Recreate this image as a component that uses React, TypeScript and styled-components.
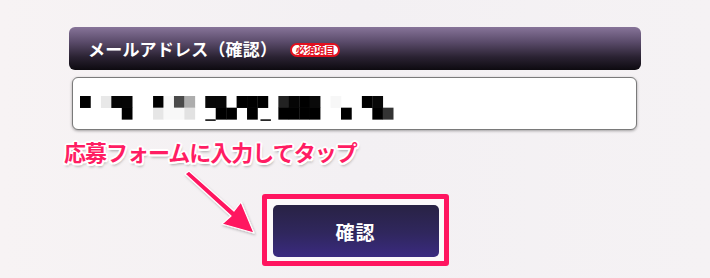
import React from "react";
import styled, { createGlobalStyle } from "styled-components";

const Global = createGlobalStyle`
  html, body { margin: 0; padding: 0; }
  body {
    width: 710px;
    height: 278px;
    overflow: hidden;
    background: linear-gradient(90deg, #f7f3f4 0%, #f3f0f3 50%, #f5f2f4 100%);
    font-family: "Noto Sans CJK JP", "Noto Sans", sans-serif;
  }
`;

const Page = styled.div`
  position: relative;
  width: 710px;
  height: 278px;
  padding-top: 27px;
  box-sizing: border-box;
`;

const Section = styled.div`
  width: 572px;
  margin-left: 69px;
  display: flex;
  flex-direction: column;
`;

const Header = styled.div`
  height: 43px;
  border-radius: 6px;
  background: linear-gradient(180deg, #877499 0%, #5a4b6a 35%, #2a2232 70%, #0d0a10 100%);
  display: flex;
  align-items: center;
  padding-left: 19px;
  gap: 13px;
  box-sizing: border-box;
`;

const HeaderTitle = styled.span`
  color: #ffffff;
  font-size: 17px;
  font-weight: 700;
  letter-spacing: 0.2px;
  margin-top: -1px;
`;

const Badge = styled.span`
  display: inline-flex;
  align-items: center;
  justify-content: center;
  box-sizing: border-box;
  height: 14px;
  width: 50px;
  background: #ffffff;
  color: #e0101e;
  border: 2px solid #e0101e;
  border-radius: 8px;
  font-size: 10px;
  font-weight: 700;
  letter-spacing: -0.3px;
  line-height: 1;
  margin-top: 3px;
  white-space: nowrap;
`;

const InputBox = styled.div`
  margin: 7px 4px 0 3px;
  height: 53px;
  background: #ffffff;
  border: 1.5px solid #7a7a7a;
  border-radius: 6px;
  box-shadow: 0 1px 3px rgba(0, 0, 0, 0.35);
  box-sizing: border-box;
  display: flex;
  align-items: flex-start;
  padding: 18px 0 0 7px;
`;

const Annotation = styled.div`
  margin: 7px 0 0 64px;
  font-size: 22px;
  font-weight: 700;
  color: #ff1d63;
  letter-spacing: -1px;
  line-height: 28px;
  text-shadow:
    -1.5px -1.5px 0 #fff, 1.5px -1.5px 0 #fff, -1.5px 1.5px 0 #fff, 1.5px 1.5px 0 #fff,
    0 -2px 0 #fff, 0 2px 0 #fff, -2px 0 0 #fff, 2px 0 0 #fff,
    1px 3px 3px rgba(0, 0, 0, 0.35);
`;

const ButtonRow = styled.div`
  display: flex;
  justify-content: center;
  margin-top: 29px;
`;

const Frame = styled.div`
  width: 187px;
  height: 72px;
  border: 5px solid #ff1560;
  border-radius: 3px;
  background: #fbf9fa;
  box-sizing: border-box;
  padding: 6px 5px 4px 6px;
  display: flex;
`;

const ConfirmButton = styled.button`
  flex: 1;
  border: none;
  border-radius: 5px;
  background: linear-gradient(180deg, #282244 0%, #30275e 55%, #3a2a80 100%);
  color: #ffffff;
  font-family: "Noto Sans CJK JP", sans-serif;
  font-size: 19px;
  font-weight: 700;
  letter-spacing: 1px;
  cursor: pointer;
  padding: 0;
`;

const Arrow = styled.svg`
  position: absolute;
  left: 180px;
  top: 168px;
`;

type Cell = [number, number, string];
const cells: Cell[] = [
  [0, 0, "#000"], [2, 0, "#e8e8e8"], [3, 0, "#050505"], [4, 0, "#050505"],
  [7, 0, "#000"], [8, 0, "#f8f8f8"], [9, 0, "#4a4a4a"], [10, 0, "#adadad"],
  [12, 0, "#080808"], [13, 0, "#080808"], [15, 0, "#000"], [16, 0, "#000"], [17, 0, "#000"],
  [19, 0, "#222"], [20, 0, "#050505"], [21, 0, "#000"], [22, 0, "#0a0a0a"],
  [24, 0, "#f7f7f7"], [27, 0, "#000"], [28, 0, "#080808"],
  [4, 1, "#000"], [7, 1, "#e6e6e6"], [8, 1, "#f8f8f8"], [9, 1, "#f8f8f8"], [10, 1, "#e2e2e2"],
  [13, 1, "#000"], [14, 1, "#000"], [16, 1, "#000"],
  [19, 1, "#000"], [20, 1, "#000"], [21, 1, "#000"], [22, 1, "#000"],
  [25, 1, "#000"], [28, 1, "#000"], [29, 1, "#333"],
];

const CW = 10.44;
const CH = 11.67;

const Mosaic = () => (
  <svg width={330} height={26} viewBox="0 0 330 26">
    {cells.map(([c, r, col], i) => (
      <rect key={i} x={c * CW} y={r * CH} width={CW + 0.3} height={CH + 0.3} fill={col} />
    ))}
    <rect x={12 * CW} y={2 * CH} width={CW} height={1.5} fill="#000" />
    <rect x={17 * CW + 3} y={2 * CH} width={CW} height={1.5} fill="#000" />
  </svg>
);

export default function App() {
  return (
    <>
      <Global />
      <Page>
        <Section>
          <Header>
            <HeaderTitle>メールアドレス（確認）</HeaderTitle>
            <Badge>必須項目</Badge>
          </Header>
          <InputBox>
            <Mosaic />
          </InputBox>
        </Section>
        <Annotation>応募フォームに入力してタップ</Annotation>
        <ButtonRow>
          <Frame>
            <ConfirmButton>確認</ConfirmButton>
          </Frame>
        </ButtonRow>
        <Arrow width={80} height={70} viewBox="0 0 80 70">
          <defs>
            <filter id="sh" x="-20%" y="-20%" width="140%" height="140%">
              <feDropShadow dx="1" dy="1.5" stdDeviation="1.2" floodColor="#000" floodOpacity="0.25" />
            </filter>
          </defs>
          <path
            d="M5 6 L9 3 L54 43 L61 34 L74 65 L42 56 L51 48 Z"
            fill="#ff1560"
            stroke="#ffffff"
            strokeWidth="1.2"
            strokeLinejoin="round"
            filter="url(#sh)"
          />
        </Arrow>
      </Page>
    </>
  );
}
